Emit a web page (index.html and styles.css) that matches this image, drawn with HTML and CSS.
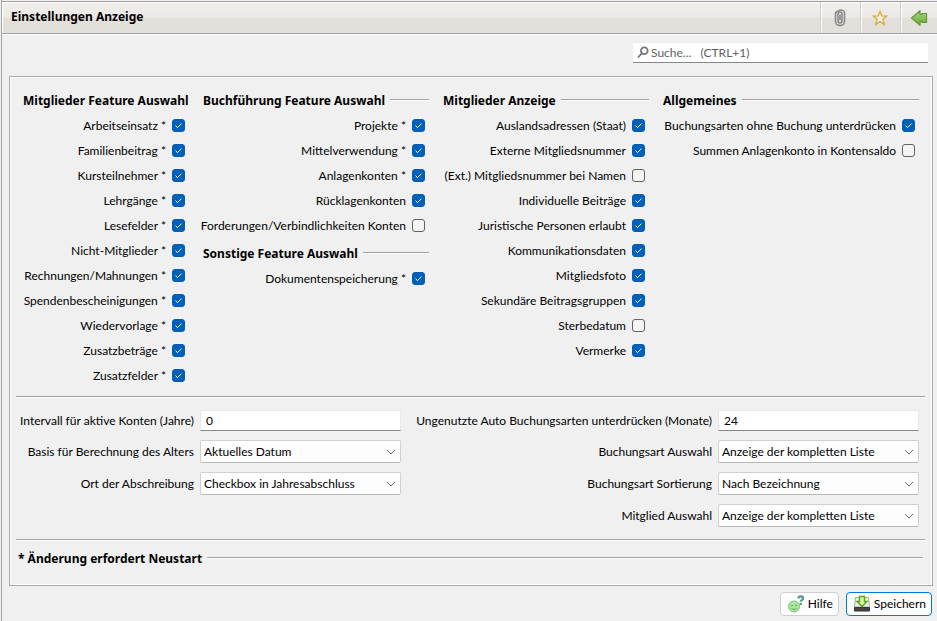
FILE: index.html
```html
<!DOCTYPE html>
<html lang="de">
<head>
<meta charset="utf-8">
<title>Einstellungen Anzeige</title>
<link rel="stylesheet" href="styles.css">
</head>
<body>
<div class="view">
  <header class="titlebar">
    <h1 class="title">Einstellungen Anzeige</h1>
    <button class="tool" type="button" aria-label="Anhang">
      <svg width="14" height="18" viewBox="0 0 14 18" fill="none" stroke="#858585" stroke-width="1.500"><path d="M5 6v6a2 2 0 0 0 4 0V5a2 2 0 0 0-4 0v1"/><path d="M2.500 5v7.500a4.500 4 0 0 0 9 0V4.500a3.500 3 0 0 0-6-2.500A3.500 3 0 0 0 2.500 5"/><path d="M7 5.500v6"/></svg>
    </button>
    <button class="tool" type="button" aria-label="Favorit">
      <svg width="16" height="16" viewBox="0 0 16 16"><path d="M8 1.200 9.800 6h5l-4 3.300 1.500 5.200L8 11.400l-4.300 3.100 1.500-5.200L1.200 6h5Z" fill="#f3eee0" stroke="#d2a935" stroke-width="1.200"/></svg>
    </button>
    <button class="tool" type="button" aria-label="Zurück">
      <svg width="18" height="16" viewBox="0 0 18 16"><defs><linearGradient id="back" x2="0" y2="1"><stop stop-color="#a8d977"/><stop offset="1" stop-color="#62ae35"/></linearGradient></defs><path d="M1.500 8 10 .8V4.500h2v-1h4.500v9H12v-1h-2v3.700Z" fill="url(#back)" stroke="#64923f" stroke-width="1.200"/></svg>
    </button>
  </header>

  <div class="searchbar">
    <label class="search">
      <svg width="12" height="13" viewBox="0 0 12 13" fill="none" stroke="#777" stroke-width="1.800"><circle cx="7.300" cy="4.700" r="3.400"/><path d="M5 7.200 1 11.500"/></svg>
      <input type="search" aria-label="Suche" placeholder="Suche...   (CTRL+1)">
    </label>
  </div>

  <main class="panel">
    <div class="features">
      <div class="column">
        <h2 class="heading"><span>Mitglieder Feature Auswahl</span></h2>
        <label class="check">Arbeitseinsatz *<input type="checkbox" checked></label>
        <label class="check">Familienbeitrag *<input type="checkbox" checked></label>
        <label class="check">Kursteilnehmer *<input type="checkbox" checked></label>
        <label class="check">Lehrgänge *<input type="checkbox" checked></label>
        <label class="check">Lesefelder *<input type="checkbox" checked></label>
        <label class="check">Nicht-Mitglieder *<input type="checkbox" checked></label>
        <label class="check">Rechnungen/Mahnungen *<input type="checkbox" checked></label>
        <label class="check">Spendenbescheinigungen *<input type="checkbox" checked></label>
        <label class="check">Wiedervorlage *<input type="checkbox" checked></label>
        <label class="check">Zusatzbeträge *<input type="checkbox" checked></label>
        <label class="check">Zusatzfelder *<input type="checkbox" checked></label>
      </div>
      <div class="column">
        <h2 class="heading"><span>Buchführung Feature Auswahl</span></h2>
        <label class="check">Projekte *<input type="checkbox" checked></label>
        <label class="check">Mittelverwendung *<input type="checkbox" checked></label>
        <label class="check">Anlagenkonten *<input type="checkbox" checked></label>
        <label class="check">Rücklagenkonten<input type="checkbox" checked></label>
        <label class="check">Forderungen/Verbindlichkeiten Konten<input type="checkbox"></label>
        <h2 class="heading"><span>Sonstige Feature Auswahl</span></h2>
        <label class="check">Dokumentenspeicherung *<input type="checkbox" checked></label>
      </div>
      <div class="column">
        <h2 class="heading"><span>Mitglieder Anzeige</span></h2>
        <label class="check">Auslandsadressen (Staat)<input type="checkbox" checked></label>
        <label class="check">Externe Mitgliedsnummer<input type="checkbox" checked></label>
        <label class="check">(Ext.) Mitgliedsnummer bei Namen<input type="checkbox"></label>
        <label class="check">Individuelle Beiträge<input type="checkbox" checked></label>
        <label class="check">Juristische Personen erlaubt<input type="checkbox" checked></label>
        <label class="check">Kommunikationsdaten<input type="checkbox" checked></label>
        <label class="check">Mitgliedsfoto<input type="checkbox" checked></label>
        <label class="check">Sekundäre Beitragsgruppen<input type="checkbox" checked></label>
        <label class="check">Sterbedatum<input type="checkbox"></label>
        <label class="check">Vermerke<input type="checkbox" checked></label>
      </div>
      <div class="column">
        <h2 class="heading"><span>Allgemeines</span></h2>
        <label class="check">Buchungsarten ohne Buchung unterdrücken<input type="checkbox" checked></label>
        <label class="check">Summen Anlagenkonto in Kontensaldo<input type="checkbox"></label>
      </div>
    </div>

    <div class="fields">
      <div class="fieldgrid">
        <label for="intervall">Intervall für aktive Konten (Jahre)</label>
        <input id="intervall" class="text" type="text" value="0">
        <label for="basis">Basis für Berechnung des Alters</label>
        <select id="basis" class="choice"><option>Aktuelles Datum</option></select>
        <label for="ort">Ort der Abschreibung</label>
        <select id="ort" class="choice"><option>Checkbox in Jahresabschluss</option></select>
      </div>
      <div class="fieldgrid">
        <label for="monate">Ungenutzte Auto Buchungsarten unterdrücken (Monate)</label>
        <input id="monate" class="text" type="text" value="24">
        <label for="auswahl">Buchungsart Auswahl</label>
        <select id="auswahl" class="choice"><option>Anzeige der kompletten Liste</option></select>
        <label for="sortierung">Buchungsart Sortierung</label>
        <select id="sortierung" class="choice"><option>Nach Bezeichnung</option></select>
        <label for="mitglied">Mitglied Auswahl</label>
        <select id="mitglied" class="choice"><option>Anzeige der kompletten Liste</option></select>
      </div>
    </div>

    <h2 class="heading note"><span>* Änderung erfordert Neustart</span></h2>
  </main>

  <footer class="actions">
    <button class="btn" type="button">
      <svg width="18" height="18" viewBox="0 0 18 18"><circle cx="7" cy="11.500" r="5.500" fill="#a9e79a" stroke="#84c184"/><path d="M4 10.500h2M8 10.500h2M4.500 13.500c1.500 1.300 3.500 1.300 5 0" fill="none" stroke="#5aa562"/><path d="M11.500 3.400c0-2.800 4.500-2.800 4.500 0 0 1.700-2.200 1.700-2.200 3.400M13.800 8v2" fill="none" stroke="#4b9990" stroke-width="2.200"/></svg>
      Hilfe
    </button>
    <button class="btn primary" type="button">
      <svg width="18" height="18" viewBox="0 0 18 18"><path d="M2.500 2.500h13l1 9.500h-15Z" fill="#eee" stroke="#aaa"/><path d="M1.500 12.500h15v3.500h-15Z" fill="#444" stroke="#333"/><path d="M6.500 1.500h5v5H14L9 11.500 4 6.500h2.500Z" fill="#d9f7a6" stroke="#57a51a" stroke-width="1.400"/></svg>
      Speichern
    </button>
  </footer>
</div>
</body>
</html>
```
FILE: styles.css
```css
* { box-sizing: border-box; }

body {
  margin: 0;
  background: #f0f0f0;
  color: #000;
  font: 12px/16px Lato, "Open Sans", sans-serif;
}

button, input, select { font: inherit; color: inherit; }
h1, h2 { margin: 0; font: bold 12px/18px "Noto Sans", "Open Sans", sans-serif; }
svg { display: block; flex: none; }

.view {
  min-height: 100vh;
  margin: 0 0 0 1px;
  padding-top: 1px;
  display: flex;
  flex-direction: column;
  border-left: 1px solid #a0a0a0;
}

.titlebar {
  display: flex;
  align-items: stretch;
  height: 33px;
  border-top: 1px solid #a0a0a0;
  border-bottom: 1px solid #a0a0a0;
  background: linear-gradient(#f1efed 0, #ebe8e5 50%, #e3dfda 52%, #e3dfda 100%);
  box-shadow: inset 1px 1px #fff, 0 1px #fff;
}
.title { flex: 1; padding: 6px 9px; }
.tool {
  width: 40px;
  display: grid;
  place-items: center;
  padding: 0 2px 0 0;
  border: 0;
  border-left: 1px solid #cfcccb;
  background: none;
  box-shadow: inset 1px 0 #fff;
}
.tool:last-child { width: 37px; padding: 0; }

.searchbar { display: flex; justify-content: flex-end; padding: 9px 9px 0 0; }
.search {
  display: flex;
  align-items: center;
  gap: 2px;
  width: 295px;
  height: 20px;
  padding-left: 4px;
  background: #fff;
  border-bottom: 1px solid #868686;
}
.search input { flex: 1; min-width: 0; padding: 0; border: 0; outline: 0; background: none; white-space: pre; }
.search input::placeholder { color: #606060; opacity: 1; }

.panel {
  flex: 1;
  margin: 13px 4px 0 7px;
  padding: 15px 7px 0 6px;
  border: 1px solid #a9a9a9;
  box-shadow: inset 1px 1px #fff, inset -1px -1px #fff;
}

.features {
  display: grid;
  grid-template-columns: 173fr 233fr 213fr 263fr;
  column-gap: 7px;
  padding: 0 6px 8px 0;
  border-bottom: 1px solid #a0a0a0;
  box-shadow: 0 1px #fff;
}
.column { min-width: 0; }
.heading {
  display: flex;
  align-items: center;
  gap: 5px;
  margin: 0 0 3px 7px;
  overflow: hidden;
  white-space: nowrap;
}
.heading::after { content: ""; flex: 1; height: 2px; margin-bottom: 3px; background: linear-gradient(#a0a0a0 50%, #fff 50%); }
.check + .heading { margin-top: 7px; }
.check {
  display: flex;
  align-items: center;
  justify-content: flex-end;
  gap: 6px;
  height: 25px;
  padding-right: 4px;
  white-space: nowrap;
}
.check input {
  appearance: none;
  flex: none;
  width: 13px;
  height: 13px;
  margin: 0;
  border: 1px solid #626262;
  border-radius: 3px;
  background: #f4f4f4;
}
.check input:checked {
  border-color: #005fb8;
  background: #005fb8 url('data:image/svg+xml,<svg xmlns="http://www.w3.org/2000/svg" viewBox="0 0 11 11"><path d="M2.500 5.700 4.500 7.600 8.500 3.600" fill="none" stroke="white"/></svg>') center / 11px 11px;
}

.fields {
  display: flex;
  justify-content: space-between;
  align-items: flex-start;
  padding: 13px 6px 12px 4px;
  border-bottom: 1px solid #a0a0a0;
  box-shadow: 0 1px #fff;
}
.fieldgrid {
  display: grid;
  grid-template-columns: auto 201px;
  gap: 9px 6px;
  align-items: center;
  text-align: right;
  white-space: nowrap;
}
.text {
  width: 100%;
  height: 21px;
  padding: 0 5px;
  border: 1px solid #e8e8e8;
  border-bottom-color: #868686;
  background: #fff;
}
.choice {
  appearance: none;
  width: 100%;
  height: 23px;
  padding: 0 20px 0 3px;
  border: 1px solid #d0d0d0;
  border-bottom-color: #b8b8b8;
  border-radius: 2px;
  background: #fdfdfd url('data:image/svg+xml,<svg xmlns="http://www.w3.org/2000/svg" viewBox="0 0 10 6"><path d="M1 1 5 5 9 1" fill="none" stroke="%23666"/></svg>') no-repeat right 4px center / 10px 6px;
}

.note { margin: 10px 2px 0 2px; }

.actions {
  display: flex;
  justify-content: flex-end;
  gap: 7px;
  padding: 6px 5px 5px;
}
.btn {
  display: flex;
  align-items: center;
  gap: 3px;
  height: 24px;
  padding: 0 5px 0 6px;
  border: 1px solid #d0d0d0;
  border-radius: 4px;
  background: #fdfdfd;
}
.primary { border-color: #0078d4; }
```
